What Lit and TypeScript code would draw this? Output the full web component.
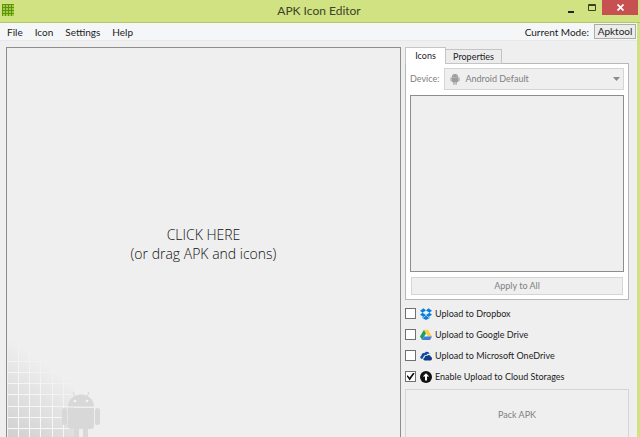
import { LitElement, html, css, svg } from "lit";
import { customElement, state } from "lit/decorators.js";

const appIcon = svg`<svg class="app-icon" viewBox="0 0 12 12" aria-hidden="true">
  <rect width="12" height="12" fill="#a2d030"/>
  <path d="M0 .5H12M0 3.500H12M0 6.500H12M0 9.500H12M.5 0V12M3.500 0V12M6.500 0V12M9.500 0V12" stroke="#5f8f1c"/>
</svg>`;

const robot = svg`
  <path d="M6 16.500a13 12 0 0 1 26 0z"/>
  <path d="M11 2l2 5M27 2l-2 5" stroke="currentColor" stroke-width="1"/>
  <path d="M6 18h26v18a3 3 0 0 1-3 3h-3v9a2.500 2.500 0 0 1-5 0v-9h-4v9a2.500 2.500 0 0 1-5 0v-9H9a3 3 0 0 1-3-3z"/>
  <rect x="0" y="18" width="5" height="17" rx="2.500"/>
  <rect x="33" y="18" width="5" height="17" rx="2.500"/>
  <circle cx="13" cy="11" r="1.300" fill="#f4f4f4"/><circle cx="25" cy="11" r="1.300" fill="#f4f4f4"/>`;

const dropbox = svg`<svg class="cloud" viewBox="0 0 12 12" aria-hidden="true">
  <path fill="#087ee0" d="M3.500 0.300L6 2.400 2.500 4.700 0 2.700zM8.500 0.300L12 2.700 9.500 4.700 6 2.400zM0 6.800L2.500 4.800 6 7 3.500 9.100zM12 6.800L9.500 4.800 6 7l2.500 2.100zM6 7.600l2.500 2.100 1.200-.8v1L6 12 2.300 9.900v-1l1.200.8z"/>
</svg>`;

const drive = svg`<svg class="cloud" viewBox="0 0 12 12" aria-hidden="true">
  <path fill="#18a05d" d="M4 .8L6 4.200 2.200 11 0 7.600z"/>
  <path fill="#ffce44" d="M4 .8h4l4 6.800H8z"/>
  <path fill="#3f7de0" d="M4.200 7.600H12L10 11H2.200z"/>
</svg>`;

const oneDrive = svg`<svg class="cloud" viewBox="0 0 12 12" aria-hidden="true">
  <path fill="#0d4aa5" d="M2 8.800C0 8.800-.3 6 1.600 5.500 1.500 3.600 3.200 2.700 4.500 3.200 5.600 1 9 1.200 9.600 4 8 3.600 7 4.200 6.400 5.200 4.800 4.800 3.600 6 3.700 7 2.900 7.300 2.500 8 2.700 8.800z"/>
  <path fill="#103c87" d="M4.800 10.500C3 10.500 2.800 8 4.600 7.700 4.600 6 6.100 5.400 7 6 8 4.200 10.600 4.700 10.700 6.800 12.400 7 12.400 10.300 10.600 10.500z"/>
</svg>`;

const upload = svg`<svg class="cloud" viewBox="0 0 12 12" aria-hidden="true">
  <circle cx="6" cy="6" r="6" fill="#111"/>
  <path d="M6 2.200L9.200 5.600H7V9.500H5V5.600H2.800z" fill="#fff"/>
</svg>`;

@customElement("app-root")
export class AppRoot extends LitElement {
  @state() private tab = "Icons";

  private clouds = [
    { id: "dropbox", label: "Upload to Dropbox", icon: dropbox, on: false },
    { id: "drive", label: "Upload to Google Drive", icon: drive, on: false },
    { id: "onedrive", label: "Upload to Microsoft OneDrive", icon: oneDrive, on: false },
    { id: "all", label: "Enable Upload to Cloud Storages", icon: upload, on: true },
  ];

  static styles = css`
    :host {
      display: block;
      height: 100vh;
      overflow: hidden;
      background: #d1e283;
      font: 9px/14px Lato, "Open Sans", sans-serif;
      color: #1c1c1c;
    }
    * { box-sizing: border-box; }
    button, select, input { font: inherit; color: inherit; margin: 0; border-radius: 0; }
    svg { display: block; }
    .titlebar {
      display: grid;
      grid-template-columns: 1fr auto 1fr;
      height: 23px;
      border-bottom: 1px solid #b5c66c;
      padding-right: 2px;
    }
    .app-icon { width: 12px; height: 12px; margin: 4px 0 0 2px; }
    h1 {
      margin: 0;
      font: 12px/21px Lato, "Open Sans", sans-serif;
      color: #3d4425;
    }
    .controls { display: flex; justify-content: flex-end; align-items: flex-start; }
    .controls button {
      display: flex;
      align-items: center;
      justify-content: center;
      width: 21px;
      height: 15px;
      padding: 0;
      border: 0;
      background: none;
    }
    .controls .close { width: 36px; background: #c75050; }
    .frame { margin-right: 3px; background: #efefef; }
    .menubar {
      display: flex;
      align-items: center;
      height: 18px;
      padding: 0 1px 0 7px;
      background: #f5f6f7;
      border-bottom: 1px solid #e8e8e8;
      font-size: 10px;
    }
    nav { display: flex; gap: 12px; flex: 1; }
    nav button { border: 0; padding: 0; background: none; }
    .mode { display: flex; align-items: center; gap: 5px; }
    .mode button {
      width: 42px;
      height: 15px;
      padding: 0;
      line-height: 13px;
      border: 1px solid #acacac;
      background: #ececec;
    }
    .content {
      display: grid;
      grid-template-columns: 1fr 224px;
      gap: 4px;
      padding: 6px 8px 6px 6px;
    }
    .drop {
      position: relative;
      display: flex;
      align-items: center;
      justify-content: center;
      border: 1px solid #8d8d8d;
      background: #efefef;
      padding: 0;
      font: 300 14px/19px "Open Sans", "Noto Sans", sans-serif;
      color: #111;
    }
    .watermark { position: absolute; left: 0; bottom: 0; width: 120px; height: 98px; color: #d8d8d8; }
    .tabs { display: flex; align-items: flex-end; height: 17px; }
    .tabs button {
      height: 15px;
      width: 56px;
      padding: 0;
      border: 1px solid #c4c4c4;
      border-left: 0;
      background: #ececec;
    }
    .tabs .active {
      width: 41px;
      height: 17px;
      background: #fff;
      border-left: 1px solid #c4c4c4;
      border-bottom: 0;
    }
    .page {
      display: grid;
      gap: 5px;
      padding: 4px;
      background: #fff;
      border: 1px solid #b8b8b8;
      border-top: 0;
    }
    .tabrow { background: linear-gradient(#b8b8b8, #b8b8b8) bottom right / 183px 1px no-repeat; }
    .device { display: flex; align-items: center; gap: 5px; color: #808080; }
    .picker { position: relative; flex: 1; }
    .picker select {
      display: block;
      appearance: none;
      width: 100%;
      height: 22px;
      padding: 0 20px;
      border: 1px solid #d5d5d5;
      background: #efefef;
      color: #808080;
      opacity: 1;
    }
    .picker .bot { position: absolute; left: 5px; top: 5px; width: 12px; height: 12px; color: #9d9d9d; }
    .picker .arrow { position: absolute; right: 4px; top: 9px; width: 7px; height: 4px; }
    .list { height: 177px; border: 1px solid #8d8d8d; background: #efefef; }
    .apply, .pack { border: 1px solid #d5d5d5; background: #efefef; color: #808080; padding: 0; }
    .apply { height: 18px; margin: 0 1px; }
    .clouds { padding: 3px 0 2px; }
    .row { display: flex; align-items: center; height: 21px; gap: 4px; }
    .row input {
      appearance: none;
      display: grid;
      place-items: center;
      width: 11px;
      height: 11px;
      border: 1px solid #707070;
      background: #fff;
    }
    .row input:checked::before {
      content: "";
      width: 8px;
      height: 8px;
      background: #111;
      clip-path: polygon(0 45%, 15% 35%, 38% 62%, 85% 0, 100% 12%, 40% 100%);
    }
    .row label { display: flex; align-items: center; gap: 3px; }
    .cloud { width: 12px; height: 12px; }
    .pack { width: 100%; height: 51px; }
  `;

  private watermark() {
    const xs = [11, 22, 33, 45, 56];
    const ys = [20, 31, 42, 53, 65, 76, 87];
    return html`<svg class="watermark" viewBox="0 0 120 98" aria-hidden="true">
      <defs>
        <linearGradient id="fade" gradientUnits="userSpaceOnUse" x1="0" y1="98" x2="48" y2="30">
          <stop offset="0" stop-color="#cfcfcf"/><stop offset="1" stop-color="#efefef"/>
        </linearGradient>
        <linearGradient id="lines" gradientUnits="userSpaceOnUse" x1="20" y1="70" x2="56" y2="25">
          <stop offset="0" stop-color="#f8f8f8"/><stop offset="1" stop-color="#efefef"/>
        </linearGradient>
      </defs>
      <rect x="1" width="66" height="98" fill="url(#fade)"/>
      ${xs.map((x) => svg`<rect x=${x} y="0" width="1" height="98" fill="url(#lines)"/>`)}
      ${ys.map((y) => svg`<rect x="0" y=${y} width="68" height="1" fill="url(#lines)"/>`)}
      <g transform="translate(55 49)" fill="currentColor">${robot}</g>
    </svg>`;
  }

  render() {
    return html`
      <header class="titlebar">
        ${appIcon}
        <h1>APK Icon Editor</h1>
        <div class="controls">
          <button aria-label="Minimize"><svg width="6" height="12"><path d="M0 10h6" stroke="#222" stroke-width="2"/></svg></button>
          <button aria-label="Maximize"><svg width="8" height="7"><path d="M.5.5h7v6h-7zM0 1.500h8" fill="none" stroke="#3c421f"/></svg></button>
          <button class="close" aria-label="Close"><svg width="7" height="7"><path d="M.5.5l6 6M6.500.5l-6 6" stroke="#fff" stroke-width="1.700"/></svg></button>
        </div>
      </header>
      <div class="frame">
        <div class="menubar">
          <nav>${["File", "Icon", "Settings", "Help"].map((m) => html`<button>${m}</button>`)}</nav>
          <div class="mode"><span>Current Mode:</span><button>Apktool</button></div>
        </div>
        <main class="content">
          <button class="drop">
            ${this.watermark()}
            <span>CLICK HERE<br />(or drag APK and icons)</span>
          </button>
          <section>
            <div class="tabrow">
              <div class="tabs" role="tablist">
                ${["Icons", "Properties"].map((t) => html`<button role="tab"
                  class=${t === this.tab ? "active" : ""}
                  aria-selected=${t === this.tab}
                  @click=${() => (this.tab = t)}>${t}</button>`)}
              </div>
            </div>
            <div class="page">
              <div class="device">
                <label for="device">Device:</label>
                <div class="picker">
                  <select id="device" disabled><option>Android Default</option></select>
                  <svg class="bot" viewBox="0 0 38 51" fill="currentColor" aria-hidden="true">${robot}</svg>
                  <svg class="arrow" viewBox="0 0 7 4" aria-hidden="true"><path d="M0 0h7L3.500 4z" fill="#8a8a8a"/></svg>
                </div>
              </div>
              <div class="list"></div>
              <button class="apply" disabled>Apply to All</button>
            </div>
            <div class="clouds">
              ${this.clouds.map((c) => html`<div class="row">
                <input type="checkbox" id=${c.id} .checked=${c.on} />
                <label for=${c.id}>${c.icon}<span>${c.label}</span></label>
              </div>`)}
            </div>
            <button class="pack" disabled>Pack APK</button>
          </section>
        </main>
      </div>
    `;
  }
}
